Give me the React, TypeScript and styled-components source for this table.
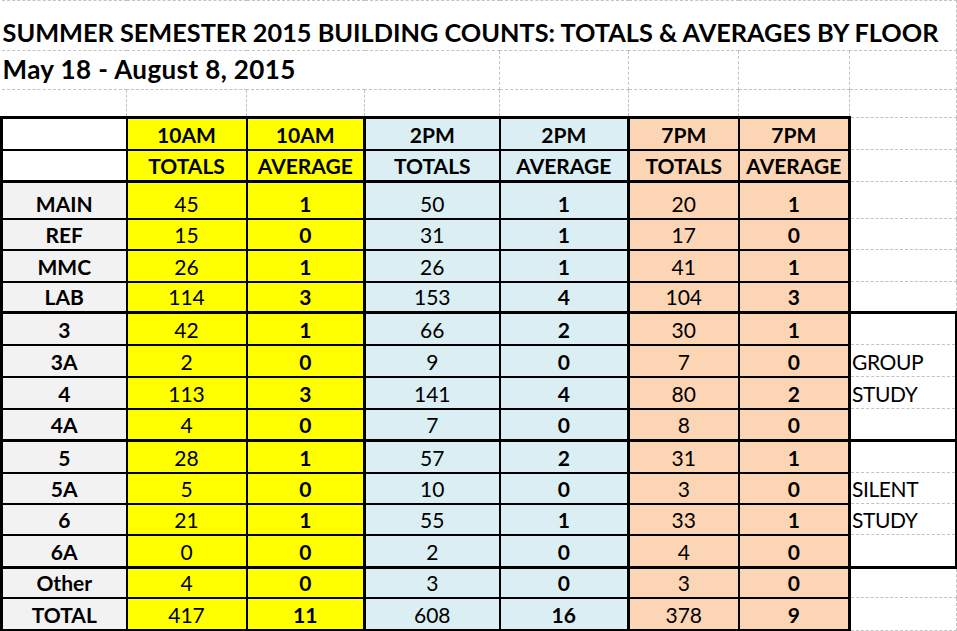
import React from 'react';
import styled, { createGlobalStyle, css } from 'styled-components';

const GlobalStyle = createGlobalStyle`
  html, body { margin: 0; padding: 0; background: #ffffff; }
  body { font-family: Lato, "Liberation Sans", sans-serif; color: #000; overflow: hidden; }
`;

type Line = 'none' | 'grid' | 'thin' | 'thick';
type Tone = 'white' | 'label' | 'yellow' | 'blue' | 'peach';

const lineCss = (l?: Line) => {
  switch (l) {
    case 'grid':
      return '1px dashed #c3c3c3';
    case 'thin':
      return '2px solid #000';
    case 'thick':
      return '3px solid #000';
    default:
      return 'none';
  }
};

const toneCss: Record<Tone, string> = {
  white: '#ffffff',
  label: '#f2f2f2',
  yellow: '#ffff00',
  blue: '#daeef3',
  peach: '#fcd5b4',
};

interface Edges {
  $t?: Line;
  $r?: Line;
  $b?: Line;
  $l?: Line;
}

const edges = css<Edges>`
  border-top: ${(p) => lineCss(p.$t)};
  border-right: ${(p) => lineCss(p.$r)};
  border-bottom: ${(p) => lineCss(p.$b)};
  border-left: ${(p) => lineCss(p.$l)};
`;

const Sheet = styled.table`
  border-collapse: collapse;
  table-layout: fixed;
  width: 955px;
  font-family: Lato, "Liberation Sans", sans-serif;
`;

const Col = styled.col<{ $w: number }>`
  width: ${(p) => p.$w}px;
`;

const Row = styled.tr<{ $h: number }>`
  height: ${(p) => p.$h}px;
`;

const BaseCell = styled.td<Edges>`
  ${edges};
  padding: 0 2px 4px;
  vertical-align: bottom;
  white-space: nowrap;
  overflow: visible;
  font-size: 21px;
  line-height: 21px;
`;

const TitleCell = styled(BaseCell)<{ $size: number; $pad: number; $track: number }>`
  font-size: ${(p) => p.$size}px;
  line-height: ${(p) => p.$size}px;
  font-weight: 700;
  padding-left: 1px;
  padding-bottom: ${(p) => p.$pad}px;
  letter-spacing: ${(p) => p.$track}px;
`;

const GridCell = styled(BaseCell)``;

const ValueCell = styled(BaseCell)<{ $tone: Tone; $bold?: boolean }>`
  background: ${(p) => toneCss[p.$tone]};
  font-weight: ${(p) => (p.$bold ? 700 : 400)};
  text-align: center;
`;

const NoteCell = styled(BaseCell)`
  background: #ffffff;
  font-weight: 400;
  text-align: left;
  padding-left: 1px;
  letter-spacing: -0.4px;
`;

const widths = [125, 120, 118, 135, 129, 110, 111, 107];
const tones: Tone[] = ['yellow', 'yellow', 'blue', 'blue', 'peach', 'peach'];
const colRight: Line[] = ['thin', 'thin', 'thick', 'thin', 'thick', 'thin', 'thick'];

type DataRow = { label: string; vals: number[]; h: number; note?: string };

const data: DataRow[] = [
  { label: 'MAIN', vals: [45, 1, 50, 1, 20, 1], h: 37 },
  { label: 'REF', vals: [15, 0, 31, 1, 17, 0], h: 31 },
  { label: 'MMC', vals: [26, 1, 26, 1, 41, 1], h: 32 },
  { label: 'LAB', vals: [114, 3, 153, 4, 104, 3], h: 31 },
  { label: '3', vals: [42, 1, 66, 2, 30, 1], h: 32 },
  { label: '3A', vals: [2, 0, 9, 0, 7, 0], h: 32, note: 'GROUP' },
  { label: '4', vals: [113, 3, 141, 4, 80, 2], h: 32, note: 'STUDY' },
  { label: '4A', vals: [4, 0, 7, 0, 8, 0], h: 32 },
  { label: '5', vals: [28, 1, 57, 2, 31, 1], h: 32 },
  { label: '5A', vals: [5, 0, 10, 0, 3, 0], h: 31, note: 'SILENT' },
  { label: '6', vals: [21, 1, 55, 1, 33, 1], h: 31, note: 'STUDY' },
  { label: '6A', vals: [0, 0, 2, 0, 4, 0], h: 33 },
  { label: 'Other', vals: [4, 0, 3, 0, 3, 0], h: 30 },
  { label: 'TOTAL', vals: [417, 11, 608, 16, 378, 9], h: 33 },
];

const thickAfter = new Set([3, 7, 11, 13]);
const boxed = (i: number) => i >= 4 && i <= 11;

const headTop = ['10AM', '10AM', '2PM', '2PM', '7PM', '7PM'];
const headBottom = ['TOTALS', 'AVERAGE', 'TOTALS', 'AVERAGE', 'TOTALS', 'AVERAGE'];

export default function App() {
  return (
    <>
      <GlobalStyle />
      <Sheet>
        <colgroup>
          {widths.map((w, i) => (
            <Col key={i} $w={w} />
          ))}
        </colgroup>
        <tbody>
          <Row $h={50}>
            <TitleCell colSpan={8} $size={25.3} $pad={5} $track={0} $t="grid" $r="grid" $b="grid">
              SUMMER SEMESTER 2015 BUILDING COUNTS: TOTALS &amp; AVERAGES BY FLOOR
            </TitleCell>
          </Row>
          <Row $h={39}>
            <TitleCell colSpan={4} $size={26} $pad={7} $track={0.4} $b="grid" $r="grid">
              May 18 - August 8, 2015
            </TitleCell>
            {[4, 5, 6, 7].map((c) => (
              <GridCell key={c} $r="grid" $b="grid" />
            ))}
          </Row>
          <Row $h={28}>
            {widths.map((_, c) => (
              <GridCell key={c} $r="grid" $b="grid" />
            ))}
          </Row>
          {[headTop, headBottom].map((labels, hr) => (
            <Row key={hr} $h={32}>
              <ValueCell
                $tone="white"
                $l="thick"
                $t={hr === 0 ? 'thick' : undefined}
                $r={colRight[0]}
                $b={hr === 1 ? 'thick' : 'thin'}
              />
              {labels.map((t, c) => (
                <ValueCell
                  key={c}
                  $tone={tones[c]}
                  $bold
                  $t={hr === 0 ? 'thick' : undefined}
                  $r={colRight[c + 1]}
                  $b={hr === 1 ? 'thick' : 'thin'}
                >
                  {t}
                </ValueCell>
              ))}
              <GridCell $r="grid" $b="grid" />
            </Row>
          ))}
          {data.map((row, i) => {
            const bottom: Line = thickAfter.has(i) ? 'thick' : 'thin';
            const noteBottom: Line =
              i === 3 || i === 7 || i === 11 ? 'thick' : 'grid';
            return (
              <Row key={row.label} $h={row.h}>
                <ValueCell $tone="label" $bold $l="thick" $r={colRight[0]} $b={bottom}>
                  {row.label}
                </ValueCell>
                {row.vals.map((v, c) => (
                  <ValueCell
                    key={c}
                    $tone={tones[c]}
                    $bold={c % 2 === 1}
                    $r={colRight[c + 1]}
                    $b={bottom}
                  >
                    {v}
                  </ValueCell>
                ))}
                <NoteCell $r={boxed(i) ? 'thick' : 'grid'} $b={noteBottom}>
                  {row.note ?? ''}
                </NoteCell>
              </Row>
            );
          })}
        </tbody>
      </Sheet>
    </>
  );
}
